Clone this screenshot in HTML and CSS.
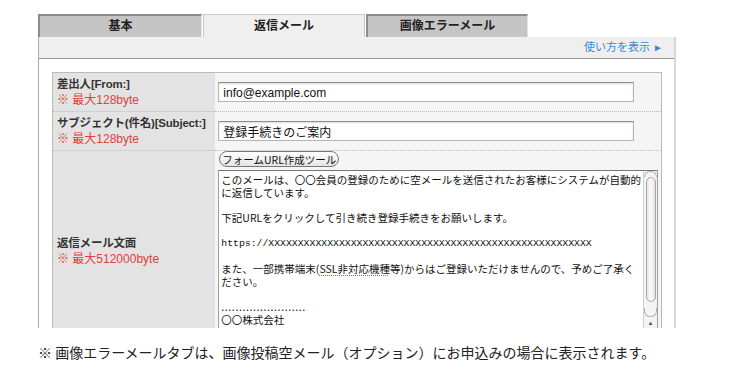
FILE: index.html
```html
<!DOCTYPE html>
<html lang="ja">
<head>
    <meta charset="UTF-8">
    <title>返信メール設定</title>
    <link rel="stylesheet" href="styles.css">
</head>
<body>
    <div class="wrap">
        <ul class="tabs">
            <li class="tab">基本</li>
            <li class="tab active">返信メール</li>
            <li class="tab">画像エラーメール</li>
        </ul>
        <div class="panel">
            <div class="panel-bar">
                <a class="howto" href="#">使い方を表示 <span class="arrow">&#9658;</span></a>
            </div>
            <div class="panel-body">
                <table class="form-table">
                    <tr class="row-short">
                        <th>差出人[From:]<span class="note">※ 最大128byte</span></th>
                        <td><input class="field" type="text" value="info@example.com"></td>
                    </tr>
                    <tr class="row-short">
                        <th>サブジェクト(件名)[Subject:]<span class="note">※ 最大128byte</span></th>
                        <td><input class="field" type="text" value="登録手続きのご案内"></td>
                    </tr>
                    <tr>
                        <th>返信メール文面<span class="note">※ 最大512000byte</span></th>
                        <td class="body-cell">
                            <button class="tool-btn" type="button">フォームURL作成ツール</button>
                            <div class="textbox">
                                <div class="textbox-text">このメールは、〇〇会員の登録のために空メールを送信されたお客様にシステムが自動的
に返信しています。

下記URLをクリックして引き続き登録手続きをお願いします。

<span class="mono">https://XXXXXXXXXXXXXXXXXXXXXXXXXXXXXXXXXXXXXXXXXXXXXXXXXXXXXXX</span>

また、一部携帯端末(<span class="spell">SSL非対応機種</span>等)からはご登録いただけませんので、予めご了承く
ださい。

<span class="dots">........................</span>
〇〇株式会社</div>
                                <div class="scrollbar">
                                    <div class="track-top"></div>
                                    <div class="thumb"></div>
                                    <div class="track-bottom"></div>
                                    <div class="arrow-up">&#9650;</div>
                                </div>
                            </div>
                        </td>
                    </tr>
                </table>
            </div>
        </div>
        <p class="footnote">※ 画像エラーメールタブは、画像投稿空メール（オプション）にお申込みの場合に表示されます。</p>
    </div>
</body>
</html>
```

FILE: styles.css
```css
body {
    margin: 0;
    background: #ffffff;
    color: #222;
    font-family: "Liberation Sans", "Noto Sans CJK JP", sans-serif;
}
.wrap {
    width: 638px;
    padding: 14px 0 0 38px;
}
.tabs {
    list-style: none;
    margin: 0;
    padding: 0;
    display: flex;
    height: 23px;
}
.tab {
    box-sizing: border-box;
    width: 164px;
    height: 23px;
    margin-right: 1px;
    background: #c5c5c5;
    border-top: 2px solid #8c8c8c;
    border-left: 2px solid #8c8c8c;
    border-right: 1px solid #e2e2e2;
    font-size: 12px;
    font-weight: bold;
    line-height: 20px;
    text-align: center;
    color: #222;
}
.tab.active {
    width: 162px;
    background: #efefef;
    border: 1px solid #c8c8c8;
    border-bottom: none;
    line-height: 22px;
}
.tab:last-child {
    width: 162px;
}
.panel {
    box-sizing: border-box;
    height: 291px;
    overflow: hidden;
    border-left: 1px solid #aaa;
    border-right: 2px solid #d6d6d6;
}
.panel-bar {
    height: 21px;
    background: #efefef;
    border-bottom: 1px solid #999;
    text-align: right;
    padding-right: 11px;
}
.howto {
    font-size: 11px;
    line-height: 21px;
    color: #3b8ad0;
    text-decoration: none;
}
.howto .arrow {
    font-size: 10px;
}
.panel-body {
    padding: 13px 12px 0 13px;
}
.form-table {
    width: 610px;
    border-collapse: collapse;
    border: 1px solid #bbb;
}
.form-table th {
    box-sizing: border-box;
    width: 166px;
    background: #e3e3e3;
    text-align: left;
    vertical-align: middle;
    padding: 0 0 0 4px;
    white-space: nowrap;
    font-size: 11.5px;
    line-height: 16px;
    font-weight: bold;
    letter-spacing: -0.2px;
    color: #333;
    border-bottom: 1px dotted #bbb;
}
.form-table td {
    background: #f5f5f5;
    padding: 0 3px;
    border-bottom: 1px dotted #bbb;
}
.row-short th, .row-short td {
    height: 38px;
}
.note {
    display: block;
    font-weight: normal;
    font-size: 12px;
    letter-spacing: 0;
    color: #d9443a;
}
.field {
    box-sizing: border-box;
    display: block;
    width: 416px;
    height: 20px;
    margin: 0;
    padding: 1px 4px 0;
    border: 1px solid #b5b5b5;
    border-top-color: #8e8e8e;
    box-shadow: inset 0 1px 2px rgba(0, 0, 0, 0.15);
    background: #fff;
    font-family: "Liberation Sans", "Noto Sans CJK JP", sans-serif;
    font-size: 12px;
    color: #111;
}
.body-cell {
    padding: 3px 4px 3px 3px;
}
.tool-btn {
    display: block;
    box-sizing: border-box;
    width: 120px;
    height: 16px;
    margin: 0 0 3px 1px;
    padding: 0;
    border: 1px solid #777;
    border-radius: 8px;
    background: linear-gradient(#ffffff, #e4e4e4);
    font-family: "Noto Sans CJK JP", sans-serif;
    font-size: 10.5px;
    line-height: 13px;
    color: #111;
}
.textbox {
    box-sizing: border-box;
    display: flex;
    height: 180px;
    border: 1px solid #a0a0a0;
    border-top-color: #777;
    background: #fff;
}
.textbox-text {
    flex: 1;
    padding: 3px 2px;
    white-space: pre;
    overflow: hidden;
    font-family: "Noto Sans CJK JP", sans-serif;
    font-size: 10.5px;
    line-height: 12.7px;
    color: #111;
}
.textbox-text span {
    vertical-align: top;
    line-height: 12.7px;
}
.mono {
    font-family: "Liberation Mono", monospace;
    font-size: 9.8px;
}
.spell {
    text-decoration: underline dotted #e05050;
    text-underline-offset: 2px;
}
.dots {
    letter-spacing: 0.6px;
}
.scrollbar {
    width: 13px;
    background: #f4f4f4;
    border-left: 1px solid #d0d0d0;
    display: flex;
    flex-direction: column;
    align-items: center;
}
.track-top {
    width: 11px;
    height: 5px;
    border: 1px solid #b0b0b0;
    border-bottom: none;
    border-radius: 6px 6px 0 0;
}
.thumb {
    box-sizing: border-box;
    width: 10px;
    height: 125px;
    border: 1px solid #a8a8a8;
    border-radius: 5px;
    background: linear-gradient(90deg, #e6e6e6, #fbfbfb 50%, #e0e0e0);
}
.track-bottom {
    width: 11px;
    height: 8px;
    margin-top: 6px;
    border: 1px solid #b0b0b0;
    border-top: none;
    border-radius: 0 0 6px 6px;
}
.arrow-up {
    font-size: 6px;
    line-height: 8px;
    margin-top: 2px;
    color: #555;
}
.footnote {
    margin: 14px 0 0;
    font-family: "Noto Sans CJK JP", sans-serif;
    font-size: 14px;
    line-height: 20px;
    color: #222;
}
```
